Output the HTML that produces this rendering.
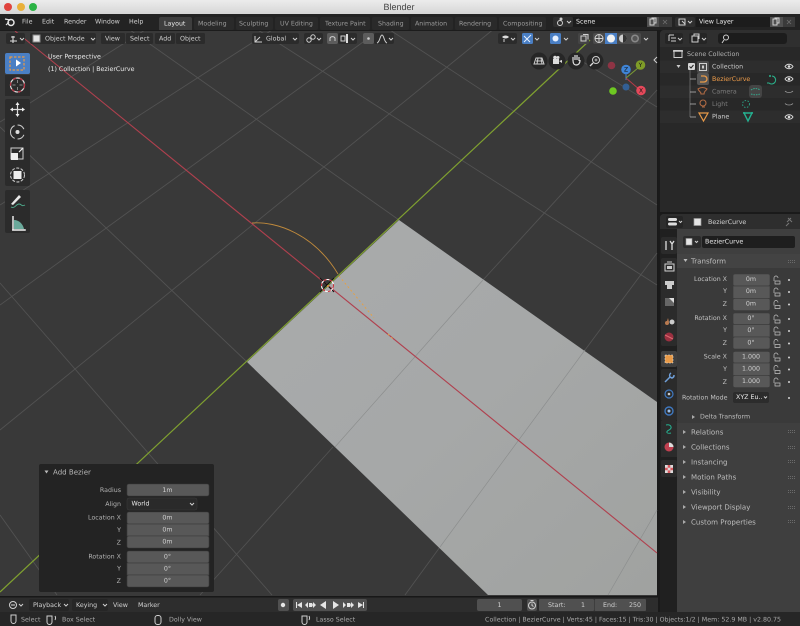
<!DOCTYPE html>
<html><head><meta charset="utf-8"><title>Blender</title>
<style>
html,body{margin:0;padding:0;background:#222;width:800px;height:626px;overflow:hidden}
svg{display:block;position:absolute;left:0;top:0;filter:blur(.35px);text-rendering:geometricPrecision}
text{font-family:"DejaVu Sans",sans-serif;font-size:6.3px;fill:#d0d0d0;dominant-baseline:central}
.e{text-anchor:end}.m{text-anchor:middle}
.d{fill:#9a9a9a}.w{fill:#e8e8e8}.s{font-size:7.05px}
.f{fill:#585858;stroke:#3a3a3a;stroke-width:.6}
.k{fill:#1e1e1e}.h{fill:#2b2b2b}
.i{fill:none;stroke:#d0d0d0;stroke-width:1}
.g{stroke:#525252;stroke-width:.9;fill:none}
.c{fill:none;stroke:#bdbdbd;stroke-width:.8}
</style></head><body>
<svg width="800" height="626" viewBox="0 0 800 626" xmlns="http://www.w3.org/2000/svg">
<defs>
<linearGradient id="tb" x1="0" y1="0" x2="0" y2="1"><stop offset="0" stop-color="#ececec"/><stop offset="1" stop-color="#d6d6d6"/></linearGradient>
<linearGradient id="pl" x1="0" y1="0" x2="1" y2="1"><stop offset="0" stop-color="#a9abac"/><stop offset=".5" stop-color="#a6a8a8"/><stop offset="1" stop-color="#a0a2a0"/></linearGradient>
<pattern id="gr" width="2" height="2" patternUnits="userSpaceOnUse"><rect width="1" height="1" fill="#6a6a6a"/></pattern>
</defs>
<rect width="800" height="626" fill="#191919"/>

<!-- viewport -->
<rect x="0" y="30" width="657" height="567" fill="#393939"/>
<g class="g">
<path d="M0 305L370 37M0 430L495 28M0 205L272 30M0 122L145 30M200 595L333 447M483 280L657 90M405 595L440 547M585 350L657 253M608 595L657 510M130 30L399 220M258 30L657 285M390 30L657 205M580 60L657 107M0 127L247 362M0 283L272 595M0 515L57 595"/>
</g>
<polygon points="399,220 657,402 657,595 488,595 247,362" fill="url(#pl)"/>
<path d="M335 447L483 280M440 547L585 350M608 595L657 510" stroke="#8c8e8e" stroke-width=".7" fill="none"/>
<path d="M0 592L590 40" stroke="#7fa030" stroke-width="1.200" fill="none"/>
<path d="M15 31L657 553" stroke="#b0404e" stroke-width="1.100" fill="none"/>
<path d="M252 223C276 221 314 234 338 274" stroke="#c08a3c" stroke-width=".9" fill="none"/>
<path d="M339 276L374 318M388 334L394 340" stroke="#e8a040" stroke-width=".9" stroke-dasharray="2 2.500" fill="none"/>
<path d="M320 278L334 292M320 292L334 278" stroke="#111" stroke-width="1"/>
<circle cx="327.500" cy="285.500" r="6" fill="none" stroke="#fff" stroke-width="1.100"/>
<circle cx="327.500" cy="285.500" r="6" fill="none" stroke="#c8303a" stroke-width="1.100" stroke-dasharray="3 3"/>
<circle cx="328" cy="286" r="1" fill="#e8a040"/>

<!-- title bar -->
<rect width="800" height="14" fill="url(#tb)"/>
<circle cx="8" cy="7" r="4" fill="#e0443e"/><circle cx="21" cy="7" r="4" fill="#e9b03a"/><circle cx="33" cy="7" r="4" fill="#2bb344"/>
<text x="399" y="7" class="m" style="font-family:'Liberation Sans',sans-serif;font-size:9px;fill:#444">Blender</text>

<!-- top bar -->
<rect y="14" width="800" height="16" fill="#232323"/>
<circle cx="11" cy="22.500" r="3" fill="none" stroke="#e6e6e6" stroke-width="1.500"/><path d="M5 19L10 20M6 25L9 22" stroke="#e6e6e6" stroke-width="1.200"/>
<text x="22" y="22">File</text><text x="42" y="22">Edit</text><text x="64" y="22">Render</text><text x="95" y="22">Window</text><text x="129" y="22">Help</text>
<path d="M159 30V19a2 2 0 0 1 2-2H190a2 2 0 0 1 2 2V30Z" fill="#3e3e3e"/>
<text x="164" y="24" class="w">Layout</text>
<rect x="194" y="17" width="40" height="13" rx="2" fill="#2a2a2a"/><text x="198" y="24" class="d">Modeling</text>
<rect x="236" y="17" width="37" height="13" rx="2" fill="#2a2a2a"/><text x="239" y="24" class="d">Sculpting</text>
<rect x="275" y="17" width="43" height="13" rx="2" fill="#2a2a2a"/><text x="280" y="24" class="d">UV Editing</text>
<rect x="320" y="17" width="50" height="13" rx="2" fill="#2a2a2a"/><text x="325" y="24" class="d">Texture Paint</text>
<rect x="372" y="17" width="37" height="13" rx="2" fill="#2a2a2a"/><text x="378" y="24" class="d">Shading</text>
<rect x="411" y="17" width="42" height="13" rx="2" fill="#2a2a2a"/><text x="415" y="24" class="d">Animation</text>
<rect x="455" y="17" width="42" height="13" rx="2" fill="#2a2a2a"/><text x="459" y="24" class="d">Rendering</text>
<rect x="499" y="17" width="47" height="13" rx="2" fill="#2a2a2a"/><text x="503" y="24" class="d">Compositing</text>
<rect x="553" y="17" width="20" height="10" rx="2" fill="#2f2f2f"/>
<circle cx="560" cy="23" r="2.500" class="i"/><circle cx="561" cy="19" r="1.500" fill="#ccc"/><path d="M567 21l2 2 2-2" class="i" stroke-width=".7"/>
<rect x="573" y="17" width="74" height="10" fill="#1c1c1c"/><text x="576" y="22" class="w">Scene</text>
<rect x="647" y="17" width="12" height="10" fill="#505050"/><rect x="659" y="17" width="13" height="10" fill="#3a3a3a"/>
<path d="M650 19h4v6h-4zM652 19v-1h4v5h-2" class="i" stroke-width=".7"/><path d="M663 20l4 4M667 20l-4 4" stroke="#6f6f6f" stroke-width=".8"/>
<rect x="675" y="17" width="20" height="10" rx="2" fill="#2f2f2f"/><path d="M679 19h6v6h-6z M682 21l3 3" class="i" stroke-width=".8"/><path d="M688 21l2 2 2-2" class="i" stroke-width=".7"/>
<rect x="696" y="17" width="74" height="10" fill="#1c1c1c"/><text x="699" y="22" class="w">View Layer</text>
<rect x="770" y="17" width="13" height="10" fill="#505050"/><rect x="783" y="17" width="12" height="10" fill="#3a3a3a"/>
<path d="M773 19h4v6h-4zM775 19v-1h4v5h-2" class="i" stroke-width=".7"/><path d="M787 20l4 4M791 20l-4 4" stroke="#6f6f6f" stroke-width=".8"/>

<!-- viewport header -->
<rect y="30" width="657" height="1" fill="#1c1c1c"/>
<rect x="6" y="33" width="19" height="11" rx="2" class="h"/><path d="M10 41h7M13 36v7M11 37h4" stroke="#ddd" stroke-width="1.100"/><path d="M20 38l2 2 2-2" class="i" stroke-width=".7"/>
<rect x="30" y="33" width="66" height="11" rx="2" class="h"/><rect x="33" y="35" width="7" height="7" fill="#e4e4e4" stroke="#888"/><text x="45" y="39">Object Mode</text><path d="M91 38l2 2 2-2" class="i" stroke-width=".7"/>
<rect x="101" y="33" width="24" height="11" rx="1.500" class="h"/><text x="105" y="39">View</text>
<rect x="126" y="33" width="27" height="11" rx="1.500" class="h"/><text x="130" y="39">Select</text>
<rect x="155" y="33" width="20" height="11" rx="1.500" class="h"/><text x="159" y="39">Add</text>
<rect x="176" y="33" width="29" height="11" rx="1.500" class="h"/><text x="180" y="39">Object</text>
<rect x="252" y="33" width="47" height="11" rx="2" class="h"/><path d="M255 36v6h7M255 42l5-5" class="i" stroke-width=".9"/><text x="266" y="39">Global</text><path d="M293 38l2 2 2-2" class="i" stroke-width=".7"/>
<rect x="304" y="33" width="19" height="11" rx="2" class="h"/><circle cx="309" cy="40" r="2.200" class="i" stroke-width=".8"/><circle cx="313" cy="37" r="2.200" class="i" stroke-width=".8"/><path d="M317 38l2 2 2-2" class="i" stroke-width=".7"/>
<rect x="327" y="33" width="11" height="11" rx="2" fill="#5c5c5c"/><path d="M330 41v-3a3 3 0 0 1 5 0v3" class="i"/>
<rect x="338" y="33" width="19" height="11" rx="2" class="h"/><rect x="341" y="36" width="4" height="5" class="i" stroke-width=".8"/><rect x="346" y="34" width="2" height="9" fill="#ddd"/><path d="M351 38l2 2 2-2" class="i" stroke-width=".7"/>
<rect x="363" y="33" width="11" height="11" rx="2" fill="#5c5c5c"/><circle cx="368.500" cy="38.500" r="1.300" fill="#ccc"/>
<rect x="374" y="33" width="20" height="11" rx="2" class="h"/><path d="M377 43c3-1 3-8 5-8s2 7 5 8" class="i" stroke-width=".8"/><path d="M389 38l2 2 2-2" class="i" stroke-width=".7"/>
<rect x="498" y="33" width="19" height="11" rx="2" class="h"/><path d="M502 37c2-2 5-2 7 0c-2 2-5 2-7 0z" fill="#ddd"/><path d="M504 39v3" class="i"/><path d="M511 38l2 2 2-2" class="i" stroke-width=".7"/>
<rect x="522" y="33" width="11" height="11" rx="1.500" fill="#4a7fc4"/><path d="M524 42l7-7M524 36l6 6" stroke="#e6f0ff" stroke-width="1"/>
<path d="M535 38l2 2 2-2" class="i" stroke-width=".7"/>
<rect x="550" y="33" width="11" height="11" rx="1.500" fill="#4a7fc4"/><circle cx="555.500" cy="38.500" r="3" fill="#e6f0ff"/><path d="M564 38l2 2 2-2" class="i" stroke-width=".7"/>
<rect x="578" y="33" width="11" height="11" rx="1.500" fill="#444"/><path d="M581 36h5v5h-5zM583 34.500h5v5" class="i" stroke-width=".7"/>
<rect x="593" y="33" width="48" height="11" rx="2" fill="#4a4a4a"/><rect x="605" y="33" width="12" height="11" fill="#4a7fc4"/>
<circle cx="599" cy="38.500" r="4" class="i" stroke-width=".7"/><path d="M595 38.500h8M599 34.500v8" class="i" stroke-width=".5"/>
<circle cx="611" cy="38.500" r="4" fill="#f2f2f2"/><circle cx="623" cy="38.500" r="4" fill="#ccc"/><path d="M623 34.500a4 4 0 0 1 0 8z" fill="#333"/><circle cx="635" cy="38.500" r="4" fill="#888"/><circle cx="635" cy="38.500" r="2.500" fill="#555"/>
<path d="M644 38l2 2 2-2" class="i" stroke-width=".7"/>

<text x="48" y="57" class="w">User Perspective</text>
<text x="48" y="69.500" class="w">(1) Collection | BezierCurve</text>

<!-- toolbar -->
<rect x="5" y="53" width="25" height="21" rx="2" fill="#4a7fc4"/>
<rect x="10" y="57" width="14" height="13" fill="none" stroke="#e89a48" stroke-width="1.200" stroke-dasharray="2.500 1.500"/><path d="M16 59.500v7l5-3.500z" fill="#fff"/>
<rect x="5" y="75" width="25" height="21" fill="#2b2b2b"/><circle cx="17.500" cy="85" r="7" fill="none" stroke="#ddd" stroke-width="1.200"/><circle cx="17.500" cy="85" r="7" fill="none" stroke="#b83040" stroke-width="1.200" stroke-dasharray="3.500 3.500"/><path d="M17.500 80v3M17.500 87v3M12.500 85h3M19.500 85h3" stroke="#aaa" stroke-width=".7"/>
<rect x="5" y="99" width="25" height="87" rx="2" fill="#2b2b2b"/>
<path d="M17.500 103v12M11 109.500h13" stroke="#ddd" stroke-width="1.200"/><path d="M17.500 102l-2 3h4zM17.500 117l-2-3h4zM10 109.500l3-2v4zM25 109.500l-3-2v4z" fill="#eee"/>
<path d="M10.500 132a7 7 0 0 1 14 0M10.500 132a7 7 0 0 0 14 0" class="i" stroke-dasharray="8 3" stroke="#ddd"/><circle cx="17.500" cy="132" r="2" fill="#ddd"/>
<rect x="11" y="148" width="12" height="11" class="i" stroke-width=".8" stroke="#999"/><rect x="11" y="153" width="7" height="7" fill="#eee"/><path d="M19 152l4-4" stroke="#eee" stroke-width="1.200"/>
<circle cx="17.500" cy="175" r="7" class="i" stroke-dasharray="3 1.500" stroke-width="1.200"/><rect x="13.500" y="171" width="8" height="8" fill="#eee"/>
<rect x="5" y="190" width="25" height="43" rx="2" fill="#2b2b2b"/>
<path d="M11 204l8-9 2 2-8 8z" fill="#e8e8e8"/><path d="M11 207c4 2 5-3 8-3s2 3 6 1" stroke="#4fb090" stroke-width=".9" fill="none"/>
<path d="M13 216v14h12" stroke="#ddd" stroke-width="1.600" fill="none"/><path d="M14 229v-9c5 0 9 4 10 9z" fill="#6aa89a"/><path d="M12 230h14" stroke="#eee" stroke-width="1.200"/>

<!-- gizmo nav -->
<circle cx="539" cy="61" r="8.500" fill="#262626"/><path d="M534 64l2-6h6l2 6zM536 61h7M538 58l-1 6M541 58l1 6" class="i" stroke-width=".7"/>
<circle cx="557" cy="61" r="8.500" fill="#262626"/><rect x="553" y="59" width="6" height="5" fill="#ddd"/><circle cx="555" cy="57.500" r="1.800" fill="#ddd"/><circle cx="558" cy="57.500" r="1.500" fill="#ddd"/><path d="M559 61l3-1v3z" fill="#ddd"/>
<circle cx="576" cy="61" r="8.500" fill="#262626"/><path d="M573 61v-4M575 60v-5M577 60v-5M579 61v-4M573 60c0 3 1 5 3 5s4-1 4-5" stroke="#ddd" stroke-width="1.200" fill="none"/>
<circle cx="595" cy="61" r="8.500" fill="#262626"/><circle cx="596" cy="60" r="3.500" class="i"/><path d="M593 63l-3 3" stroke="#ddd" stroke-width="1.300"/><path d="M594.500 60h3M596 58.500v3" stroke="#ddd" stroke-width=".7"/>
<path d="M626 72L626 80" stroke="#4a80c8" stroke-width="1"/><path d="M626 78L640 90" stroke="#b83a48" stroke-width="1"/><path d="M626 78L638 68" stroke="#7a9a35" stroke-width="1"/>
<circle cx="611.500" cy="65.500" r="3.800" fill="#8e3444"/><circle cx="626" cy="87" r="3.500" fill="#335f94"/><circle cx="613" cy="91" r="3.800" fill="#6ec822"/>
<circle cx="626" cy="69.500" r="4.800" fill="#3f84d6"/><text x="626" y="69.800" class="m" style="font-size:6px;fill:#111">Z</text>
<circle cx="640.500" cy="65" r="4.800" fill="#7f9c28"/><text x="640.500" y="65.300" class="m" style="font-size:6px;fill:#111">Y</text>
<circle cx="641" cy="90.500" r="4.800" fill="#e5485a"/><text x="641" y="90.800" class="m" style="font-size:6px;fill:#111">X</text>
<path d="M657 57l-3 3 3 3" class="i" stroke-width=".7" stroke="#888"/>

<!-- Add Bezier panel -->
<rect x="39" y="464" width="175" height="128" rx="2" fill="#232323"/>
<path d="M44.500 470.500h4l-2 3z" fill="#bbb"/><text x="53" y="472" class="s" style="fill:#b8b8b8">Add Bezier</text>
<text x="121" y="490.500" class="e" style="fill:#b0b0b0">Radius</text><rect x="127" y="484" width="82" height="12" rx="2" class="f"/><text x="167.500" y="490.500" class="m">1m</text>
<text x="121" y="504.500" class="e" style="fill:#b0b0b0">Align</text><rect x="127" y="498" width="70" height="12" rx="2" fill="#2a2a2a" stroke="#3c3c3c" stroke-width=".5"/><text x="131.500" y="504" class="w">World</text><path d="M190 503l2 2 2-2" class="i" stroke-width=".7"/>
<text x="121" y="518" class="e" style="fill:#b0b0b0">Location X</text><text x="121" y="530.500" class="e" style="fill:#b0b0b0">Y</text><text x="121" y="543" class="e" style="fill:#b0b0b0">Z</text>
<rect x="127" y="512" width="82" height="12" rx="2" class="f"/><rect x="127" y="524" width="82" height="12" class="f"/><rect x="127" y="536" width="82" height="12" rx="2" class="f"/>
<text x="167.500" y="518" class="m">0m</text><text x="167.500" y="530" class="m">0m</text><text x="167.500" y="542" class="m">0m</text>
<text x="121" y="557" class="e" style="fill:#b0b0b0">Rotation X</text><text x="121" y="569" class="e" style="fill:#b0b0b0">Y</text><text x="121" y="581.500" class="e" style="fill:#b0b0b0">Z</text>
<rect x="127" y="551" width="82" height="12" rx="2" class="f"/><rect x="127" y="563" width="82" height="12" class="f"/><rect x="127" y="575" width="82" height="12" rx="2" class="f"/>
<text x="167.500" y="557" class="m">0°</text><text x="167.500" y="569" class="m">0°</text><text x="167.500" y="581" class="m">0°</text>

<!-- timeline -->
<rect y="596" width="658" height="1.500" fill="#181818"/>
<rect y="597.500" width="658" height="14.500" fill="#2d2d2d"/>
<circle cx="13" cy="605" r="3.500" class="i"/><path d="M11 605h4" stroke="#ddd"/><path d="M19 604l2 2 2-2" class="i" stroke-width=".7"/>
<rect x="29" y="599" width="40" height="12" rx="2" fill="#262626"/><text x="33" y="605.500">Playback</text><path d="M64 604l2 2 2-2" class="i" stroke-width=".7"/>
<rect x="72" y="599" width="36" height="12" rx="2" fill="#262626"/><text x="76" y="605.500">Keying</text><path d="M103 604l2 2 2-2" class="i" stroke-width=".7"/>
<text x="113" y="605.500">View</text><text x="138" y="605.500">Marker</text>
<rect x="278" y="599" width="11" height="12" rx="2" fill="#505050"/><circle cx="283" cy="605" r="2.200" fill="#e6e6e6"/>
<rect x="293" y="599" width="74" height="12" rx="2" fill="#505050"/>
<path d="M296 602v6h1v-6zM302 602l-5 3 5 3z" fill="#e6e6e6"/>
<path d="M308 602l-3 3 3 3zM309 603h3l1 2-1 2h-3zM313 602l3 3-3 3z" fill="#e6e6e6"/>
<path d="M326 601l-6 4 6 4z" fill="#e6e6e6"/><path d="M333 601l6 4-6 4z" fill="#e6e6e6"/>
<path d="M343 602l3 3-3 3zM347 603h3l1 2-1 2h-3zM351 602l3 3-3 3z" fill="#e6e6e6"/>
<path d="M358 602l5 3-5 3zM364 602v6h-1v-6z" fill="#e6e6e6"/>
<rect x="477" y="599" width="45" height="12" rx="2" fill="#505050"/><text x="499.500" y="605.500" class="m">1</text>
<rect x="527" y="599" width="10" height="12" rx="2" fill="#505050"/><circle cx="532" cy="605.500" r="3.500" class="i"/><path d="M532 603.500v2l1.500 1M530.500 600.500h3" class="i" stroke-width=".7"/>
<rect x="539" y="599" width="55" height="12" fill="#505050" rx="1"/><rect x="594.500" y="599" width="51.500" height="12" rx="1" fill="#505050"/>
<text x="548" y="605.500">Start:</text><text x="585" y="605.500" class="e">1</text><text x="603" y="605.500">End:</text><text x="641" y="605.500" class="e">250</text>

<!-- status bar -->
<rect y="612" width="800" height="14" fill="#262626"/>
<path d="M11 615h5v6a2.500 2.500 0 0 1-5 0z" class="i" stroke-width=".7"/><text x="21" y="620" style="fill:#a8a8a8">Select</text>
<path d="M47 616h5v6a2.500 2.500 0 0 1-5 0zM55 616a4 4 0 0 1 0 4" class="i" stroke-width=".7"/><text x="62" y="620" style="fill:#a8a8a8">Box Select</text>
<rect x="155" y="615.500" width="6" height="9" rx="2.500" class="i" stroke-width=".7"/><text x="169" y="620" style="fill:#a8a8a8">Dolly View</text>
<path d="M302 616h5v6a2.500 2.500 0 0 1-5 0zM309 616a4 4 0 0 1 0 4" class="i" stroke-width=".7"/><text x="316" y="620" style="fill:#a8a8a8">Lasso Select</text>
<text x="781" y="620" class="e" style="fill:#a8a8a8">Collection | BezierCurve | Verts:45 | Faces:15 | Tris:30 | Objects:1/2 | Mem: 52.9 MB | v2.80.75</text>

<!-- outliner -->
<rect x="658" y="30" width="142" height="182" fill="#1a1a1a"/>
<path d="M660 212V34a4 4 0 0 1 4-4h136v182z" fill="#282828"/>
<path d="M660 47V34a4 4 0 0 1 4-4h136v17z" fill="#2f2f2f"/>
<rect x="665" y="33" width="18" height="11" rx="2" fill="#252525"/><path d="M669 35h5M671 38h5M671 41h5M669 35v6" class="i" stroke-width=".8"/><path d="M678 38l2 2 2-2" class="i" stroke-width=".7"/>
<rect x="689" y="33" width="18" height="11" rx="2" fill="#252525"/><path d="M692 36h6v6h-6z M694 36v-2h5v5" class="i" stroke-width=".7"/><path d="M702 38l2 2 2-2" class="i" stroke-width=".7"/>
<rect x="718" y="33" width="69" height="11" rx="3" fill="#1c1c1c"/><circle cx="726" cy="37.500" r="2.500" class="i" stroke-width=".8"/><path d="M724 40l-2 3" class="i"/>
<rect x="660" y="85.500" width="140" height="12.500" fill="#2d2d2d"/><rect x="660" y="110.500" width="140" height="12.500" fill="#2d2d2d"/><rect x="660" y="60.500" width="140" height="12.500" fill="#2d2d2d"/>
<rect x="674" y="50.500" width="8" height="7" class="i" stroke-width=".8"/><path d="M673 51h10" stroke="#ccc" stroke-width="1.500"/>
<text x="687" y="54.500" style="fill:#b0b0b0">Scene Collection</text>
<path d="M676.500 65h4l-2 3z" fill="#ccc"/>
<rect x="688" y="63" width="7" height="7" rx="1" fill="#d8d8d8"/><path d="M689.500 66.500l1.500 1.500 2.500-3" stroke="#222" stroke-width="1" fill="none"/>
<rect x="697" y="61" width="12" height="12" rx="2" fill="#4a4a4a"/><rect x="699.500" y="63.500" width="7" height="7" class="i" stroke-width=".8"/><rect x="702" y="65.500" width="2" height="3" fill="#ccc"/>
<text x="712" y="67" style="fill:#c8c8c8">Collection</text>
<path d="M690 70v47" stroke="#888" stroke-width=".6"/><path d="M690 79h6M690 92h6M690 104h6M690 117h6" stroke="#bbb" stroke-width=".8"/>
<rect x="697" y="73" width="12" height="12" rx="2" fill="#555"/><path d="M701 76h3a3 3 0 0 1 0 6h-4" stroke="#e89a48" stroke-width="1.300" fill="none"/>
<text x="712" y="79.500" style="fill:#ee9c4a">BezierCurve</text>
<path d="M772 76a4 4 0 1 1-3 7l-2 0" stroke="#2ab38c" stroke-width="1" fill="none"/><circle cx="770" cy="76" r="1" fill="#2ab38c"/>
<rect x="749" y="85" width="13" height="13" rx="3" fill="#454545"/><path d="M751 90c3-2 6-2 9 0M751 94c3 1 6 1 9 0" stroke="#35a88c" stroke-width="1" stroke-dasharray="1.500 1" fill="none"/>
<path d="M698 89c3-2 6-2 9 0c-2 3-3 2-3 5h-3c0-3-2-2-3-5z" fill="none" stroke="#b06a44" stroke-width="1.100"/>
<text x="712" y="92" style="fill:#7c7c7c">Camera</text>
<circle cx="703" cy="103" r="3" fill="none" stroke="#b06a44" stroke-width="1.100"/><path d="M702 107h3" stroke="#b06a44"/>
<text x="712" y="104.500" style="fill:#7c7c7c">Light</text>
<circle cx="746" cy="104" r="3.500" fill="none" stroke="#2a9a80" stroke-dasharray="1.500 1.500"/>
<path d="M699 113h9l-4.500 8z" fill="none" stroke="#e89a48" stroke-width="1.200"/>
<text x="712" y="117" style="fill:#d0d0d0">Plane</text>
<path d="M744 113h8l-4 8z" fill="none" stroke="#25b090" stroke-width="1.400"/><circle cx="744" cy="113" r="1" fill="#25b090"/><circle cx="752" cy="113" r="1" fill="#25b090"/>
<path d="M785 66.500c2-3 6-3 8 0c-2 3-6 3-8 0z M785 79c2-3 6-3 8 0c-2 3-6 3-8 0z M785 117c2-3 6-3 8 0c-2 3-6 3-8 0z" fill="none" stroke="#ddd" stroke-width=".9"/>
<circle cx="789" cy="66.500" r="1.300" fill="#ddd"/><circle cx="789" cy="79" r="1.300" fill="#ddd"/><circle cx="789" cy="117" r="1.300" fill="#ddd"/>
<path d="M785 91c2 2 6 2 8 0M785 103.500c2 2 6 2 8 0" fill="none" stroke="#999" stroke-width=".8"/>

<!-- properties -->
<rect x="658" y="212" width="142" height="400" fill="#1a1a1a"/>
<path d="M660 612V218a4 4 0 0 1 4-4h136v398z" fill="#3f3f3f"/>
<path d="M660 229V218a4 4 0 0 1 4-4h136v15z" fill="#2e2e2e"/>
<rect x="660" y="229" width="17" height="383" fill="#202020"/>
<rect x="666" y="216" width="17" height="12" rx="2" fill="#252525"/><rect x="668" y="218" width="9" height="3" rx="1.500" fill="#ddd"/><rect x="668" y="222.500" width="9" height="3" rx="1.500" fill="#ddd"/><path d="M679 221l1.500 1.500 1.500-1.500" class="i" stroke-width=".7"/>
<rect x="694" y="218.500" width="7" height="7" fill="#e4e4e4" stroke="#999" stroke-width=".7"/><text x="708" y="222.500">BezierCurve</text>
<path d="M786 226l3-3M788 218l4 4M787 222l4-4" stroke="#777" stroke-width="1" fill="none"/>
<!-- prop tabs -->
<rect x="661" y="237" width="16" height="17" rx="2" fill="#2b2b2b"/><path d="M666 241v9M670 241l2 3 2-3M672 244v6" stroke="#ddd" stroke-width="1.300" fill="none"/>
<rect x="661" y="258" width="16" height="88" rx="2" fill="#2b2b2b"/>
<rect x="665" y="264" width="9" height="7" class="i" stroke-width=".9"/><path d="M667 262h5" stroke="#ccc"/><rect x="667" y="266" width="5" height="3" fill="#ccc"/>
<path d="M665 281h9v4h-9zM667 285v4h5v-4" fill="#ccc"/>
<rect x="665" y="298" width="9" height="8" fill="#666"/><path d="M669 298h5v5z" fill="#ddd"/>
<circle cx="672" cy="322" r="2.500" fill="#ccc"/><path d="M666 324l2-6 1 4z" fill="#b87a50"/><circle cx="667" cy="323" r="2" fill="#b87a50"/>
<circle cx="669" cy="337" r="4.500" fill="#9a3040"/><path d="M665 335l8 4" stroke="#dd6a70" stroke-width="1"/>
<rect x="661" y="351" width="16" height="16" rx="2" fill="#3f3f3f"/><rect x="665" y="355" width="8" height="8" fill="#e89a48" stroke="#e0e0e0" stroke-width=".5" stroke-dasharray="2 1"/>
<rect x="661" y="369" width="16" height="52" rx="2" fill="#2b2b2b"/>
<path d="M665 382l5-5M671 373a3 3 0 0 0-1 4l2 1a3 3 0 0 0 2-3" stroke="#6f9fd8" stroke-width="1.500" fill="none"/>
<circle cx="669" cy="394" r="4" fill="none" stroke="#3f78c0" stroke-width="1.200"/><circle cx="669" cy="394" r="1.300" fill="#ccc"/>
<circle cx="669" cy="411" r="4" fill="none" stroke="#3f78c0" stroke-width="1.400"/><circle cx="669" cy="411" r="1.500" fill="#9fc0e8"/>
<rect x="661" y="421" width="16" height="36" fill="#2b2b2b"/>
<path d="M666 425c5-1 7 3 3 5s-2 4 2 3" stroke="#25b090" stroke-width="1" fill="none"/>
<circle cx="669" cy="447" r="4.500" fill="#c04050"/><path d="M669 442.500a4.500 4.500 0 0 1 4.500 4.500h-4.500z" fill="#ddd"/>
<rect x="661" y="460" width="16" height="17" rx="2" fill="#2b2b2b"/>
<rect x="665" y="465" width="8" height="8" fill="#d85a60"/><path d="M665 465h2.700v2.700h-2.700zM670.300 465h2.700v2.700h-2.700zM667.700 467.700h2.700v2.700h-2.700zM665 470.300h2.700v2.700h-2.700zM670.300 470.300h2.700v2.700h-2.700z" fill="#ddd"/>

<!-- name field -->
<rect x="683" y="236" width="18" height="12" rx="2" fill="#2c2c2c"/><rect x="686" y="238.500" width="6" height="6.500" fill="#e4e4e4" stroke="#999" stroke-width=".6"/><path d="M695 241l1.500 1.500 1.500-1.500" class="i" stroke-width=".7"/>
<rect x="702" y="236" width="93" height="12" rx="2" fill="#1e1e1e"/><text x="705" y="242" class="w">BezierCurve</text>
<!-- panel -->
<rect x="677" y="254" width="123" height="169" fill="#3a3a3a"/>
<rect x="677" y="254" width="123" height="14" fill="#434343"/>
<path d="M683.500 259h4l-2 3z" fill="#bbb"/><text x="691" y="261" class="s" style="fill:#bcbcbc">Transform</text>
<rect x="788" y="259" width="7" height="4" fill="url(#gr)"/>
<g>
<text x="727" y="279.500" class="e" style="fill:#c0c0c0">Location X</text><text x="727" y="291.500" class="e" style="fill:#c0c0c0">Y</text><text x="727" y="304.500" class="e" style="fill:#c0c0c0">Z</text>
<text x="727" y="318.500" class="e" style="fill:#c0c0c0">Rotation X</text><text x="727" y="330.500" class="e" style="fill:#c0c0c0">Y</text><text x="727" y="343.500" class="e" style="fill:#c0c0c0">Z</text>
<text x="727" y="357" class="e" style="fill:#c0c0c0">Scale X</text><text x="727" y="369.500" class="e" style="fill:#c0c0c0">Y</text><text x="727" y="382.500" class="e" style="fill:#c0c0c0">Z</text>
</g>
<rect x="733" y="274" width="37" height="12" rx="2" class="f"/><rect x="733" y="286" width="37" height="12.500" class="f"/><rect x="733" y="298.500" width="37" height="12" rx="2" class="f"/>
<rect x="733" y="313" width="37" height="11.500" rx="2" class="f"/><rect x="733" y="324.500" width="37" height="12.500" class="f"/><rect x="733" y="337" width="37" height="12" rx="2" class="f"/>
<rect x="733" y="351.500" width="37" height="11.500" rx="2" class="f"/><rect x="733" y="363" width="37" height="12.500" class="f"/><rect x="733" y="375.500" width="37" height="12" rx="2" class="f"/>
<text x="751" y="279.500" class="m">0m</text><text x="751" y="291.500" class="m">0m</text><text x="751" y="304" class="m">0m</text>
<text x="751" y="318.500" class="m">0°</text><text x="751" y="330.500" class="m">0°</text><text x="751" y="343" class="m">0°</text>
<text x="751" y="357" class="m">1.000</text><text x="751" y="369" class="m">1.000</text><text x="751" y="381.500" class="m">1.000</text>
<g fill="none" stroke="#c4c4c4" stroke-width=".7">
<path d="M774 281v-3a2 2 0 0 1 4 0M775 281h5v3h-5z"/><path d="M774 293v-3a2 2 0 0 1 4 0M775 293h5v3h-5z"/><path d="M774 305.500v-3a2 2 0 0 1 4 0M775 305.500h5v3h-5z"/>
<path d="M774 320v-3a2 2 0 0 1 4 0M775 320h5v3h-5z"/><path d="M774 332v-3a2 2 0 0 1 4 0M775 332h5v3h-5z"/><path d="M774 344.500v-3a2 2 0 0 1 4 0M775 344.500h5v3h-5z"/>
<path d="M774 358v-3a2 2 0 0 1 4 0M775 358h5v3h-5z"/><path d="M774 370.500v-3a2 2 0 0 1 4 0M775 370.500h5v3h-5z"/><path d="M774 383v-3a2 2 0 0 1 4 0M775 383h5v3h-5z"/>
</g>
<g fill="#d4d4d4"><circle cx="789" cy="280" r="1"/><circle cx="789" cy="292" r="1"/><circle cx="789" cy="304.500" r="1"/><circle cx="789" cy="319" r="1"/><circle cx="789" cy="331" r="1"/><circle cx="789" cy="343.500" r="1"/><circle cx="789" cy="357.500" r="1"/><circle cx="789" cy="369.500" r="1"/><circle cx="789" cy="382" r="1"/><circle cx="789" cy="398" r="1"/></g>
<text x="682" y="398" style="fill:#c0c0c0">Rotation Mode</text>
<rect x="733" y="392" width="36" height="11" rx="2" fill="#2c2c2c"/><text x="736" y="397.500" class="w">XYZ Eu..</text><path d="M764 396.500l1.500 1.500 1.500-1.500" class="i" stroke-width=".7"/>
<path d="M692 415v4l3-2z" fill="#aaa"/><text x="700" y="417" style="fill:#bcbcbc">Delta Transform</text>

<!-- collapsed panels -->
<g fill="#aaa"><path d="M683 430v4l3-2zM683 445v4l3-2zM683 460v4l3-2zM683 475v4l3-2zM683 490v4l3-2zM683 505v4l3-2zM683 520v4l3-2z"/></g>
<text x="691" y="432" class="s" style="fill:#bcbcbc">Relations</text>
<text x="691" y="447" class="s" style="fill:#bcbcbc">Collections</text>
<text x="691" y="462" class="s" style="fill:#bcbcbc">Instancing</text>
<text x="691" y="477" class="s" style="fill:#bcbcbc">Motion Paths</text>
<text x="691" y="492" class="s" style="fill:#bcbcbc">Visibility</text>
<text x="691" y="507" class="s" style="fill:#bcbcbc">Viewport Display</text>
<text x="691" y="522" class="s" style="fill:#bcbcbc">Custom Properties</text>
<g fill="url(#gr)"><rect x="788" y="430" width="7" height="4"/><rect x="788" y="445" width="7" height="4"/><rect x="788" y="460" width="7" height="4"/><rect x="788" y="475" width="7" height="4"/><rect x="788" y="490" width="7" height="4"/><rect x="788" y="505" width="7" height="4"/><rect x="788" y="520" width="7" height="4"/></g>
</svg>
</body></html>
